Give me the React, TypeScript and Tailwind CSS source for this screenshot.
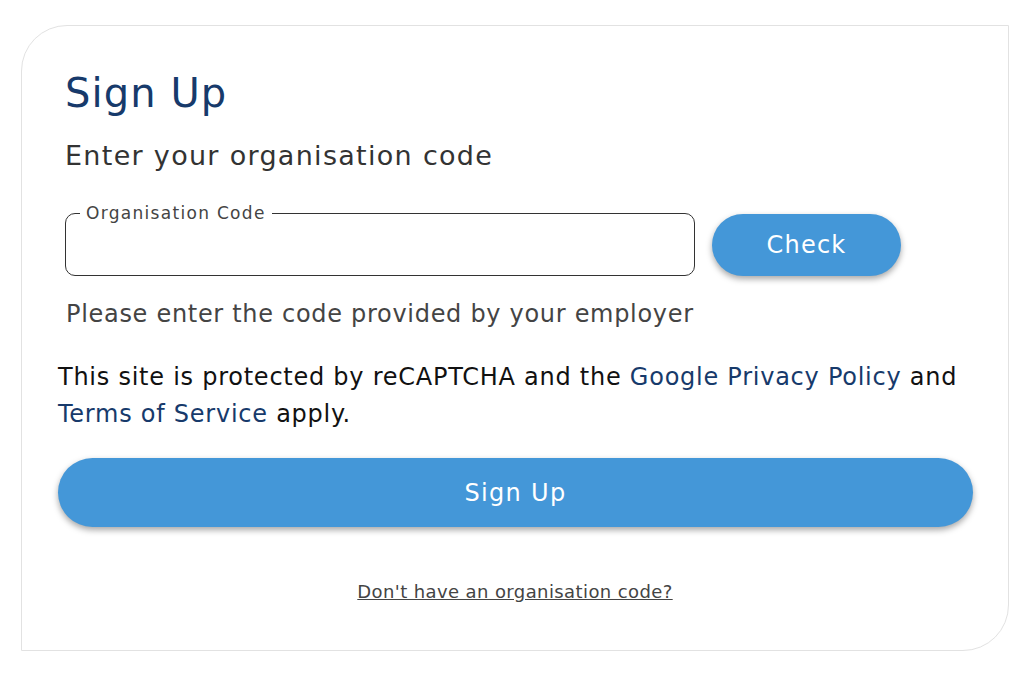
import React from "react";

const App: React.FC = () => {
	return (
		<div className="min-h-screen w-full bg-white pl-[21px] pt-[25px] font-['DejaVu_Sans',sans-serif]">
			<div className="flex h-[626px] w-[988px] flex-col rounded-tl-[46px] rounded-br-[46px] border border-[#e2e2e2] px-[36px] pt-[43px]">
				<div className="pl-[7px]">
					<h1 className="text-[40px] leading-[48px] tracking-[1.1px] text-[#173a6b]">Sign Up</h1>
					<h2 className="mt-[21px] text-[27px] leading-[36px] tracking-[1.3px] text-[#333333]">
						Enter your organisation code
					</h2>

					<div className="mt-[30px] flex items-center gap-[17px]">
						<fieldset className="h-[72px] w-[630px] rounded-[10px] border border-[#333333] px-[14px] pb-[8px]">
							<legend className="px-[6px] text-[17px] leading-[18px] tracking-[1.3px] text-[#444444]">
								Organisation Code
							</legend>
							<input className="h-full w-full outline-none" />
						</fieldset>
						<button className="mt-[9px] h-[62px] w-[189px] rounded-full bg-[#4497d8] text-[24px] tracking-[1.2px] text-white shadow-[0_3px_6px_rgba(0,0,0,0.35)]">
							Check
						</button>
					</div>

					<p className="mt-[23px] pl-[1px] text-[24px] leading-[30px] tracking-[0.7px] text-[#444444]">
						Please enter the code provided by your employer
					</p>
				</div>

				<p className="mt-[30px] text-[24px] leading-[37px] tracking-[0.75px] text-[#111111]">
					This site is protected by reCAPTCHA and the{" "}
					<a href="#" className="text-[#173a6b]">
						Google Privacy Policy
					</a>{" "}
					and{" "}
					<a href="#" className="text-[#173a6b]">
						Terms of Service
					</a>{" "}
					apply.
				</p>

				<button className="mt-[25px] h-[69px] w-[915px] rounded-full bg-[#4497d8] text-[24px] tracking-[1.3px] text-white shadow-[0_3px_6px_rgba(0,0,0,0.35)]">
					Sign Up
				</button>

				<div className="mt-[51px] flex justify-center">
					<a href="#" className="text-[18px] tracking-[0.4px] text-[#444444] underline">
						Don't have an organisation code?
					</a>
				</div>
			</div>
		</div>
	);
};

export default App;
